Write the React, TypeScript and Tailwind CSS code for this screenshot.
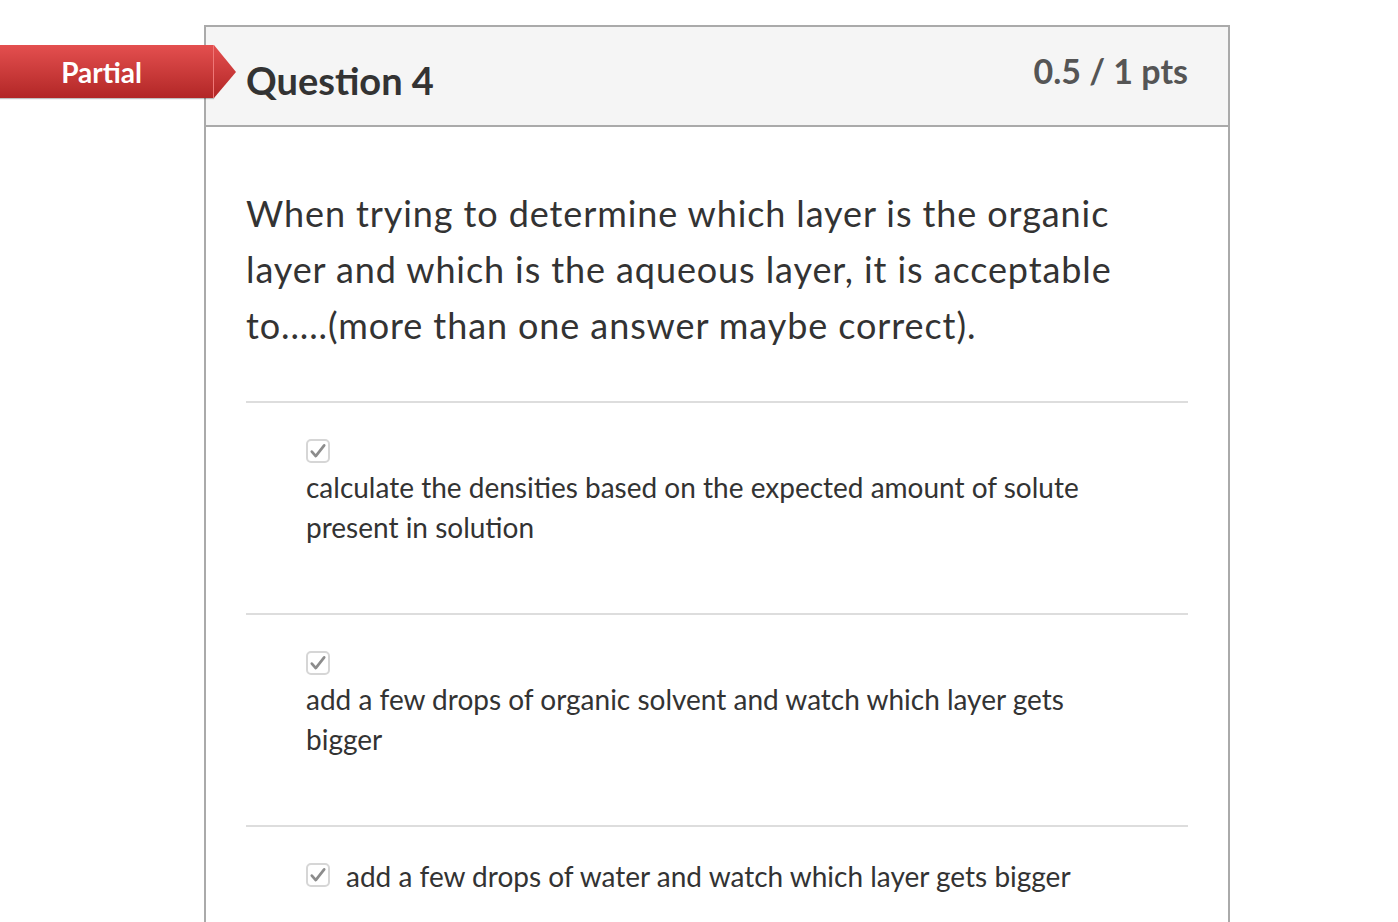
import React from "react"

const font = { fontFamily: "Lato, 'Open Sans', sans-serif" }

function Check() {
  return (
    <span className="inline-flex w-[24px] h-[24px] shrink-0 items-center justify-center rounded-[5px] border-2 border-[#d6d6d6] bg-white">
      <svg viewBox="0 0 16 16" className="w-[18px] h-[18px]" fill="none" stroke="#8c8c8c" strokeWidth={2.4} strokeLinecap="round" strokeLinejoin="round">
        <path d="M2.5 8.5l3.5 4L13.5 3" />
      </svg>
    </span>
  )
}

function PartialBadge() {
  return (
    <div className="absolute left-0 top-[45px] flex h-[53px] z-10">
      <div className="w-[214px] h-full bg-gradient-to-b from-[#e44f4f] to-[#b22626] flex items-center justify-center border-r border-[#e77] pr-[10px] shadow-[0_1px_1px_rgba(0,0,0,0.25)]">
        <span className="text-white font-bold text-[28px] leading-none">Partial</span>
      </div>
      <svg width="22" height="53" viewBox="0 0 22 53" className="block">
        <defs>
          <linearGradient id="bg" x1="0" y1="0" x2="0" y2="1">
            <stop offset="0" stopColor="#e44f4f" />
            <stop offset="1" stopColor="#b22626" />
          </linearGradient>
        </defs>
        <path d="M0 0 L22 27 L0 53 Z" fill="url(#bg)" />
      </svg>
    </div>
  )
}

const answers = [
  { text: "calculate the densities based on the expected amount of solute present in solution", inline: false },
  { text: "add a few drops of organic solvent and watch which layer gets bigger", inline: false },
  { text: "add a few drops of water and watch which layer gets bigger", inline: true },
]

export default function App() {
  return (
    <div className="relative min-h-screen bg-white pt-[25px]" style={font}>
      <PartialBadge />
      <div className="ml-[204px] w-[1026px] border-2 border-b-0 border-[#aaaaaa] min-h-[900px]">
        <div className="h-[100px] bg-[#f5f5f5] border-b-2 border-[#aaaaaa] flex justify-between px-[40px]">
          <h2 className="pt-[31px] text-[38px] font-bold leading-[1.2] text-[#333]">Question 4</h2>
          <div className="pt-[24px] text-[34px] font-bold leading-[1.2] text-[#555]">0.5 / 1 pts</div>
        </div>
        <div className="px-[40px] pt-[58px]">
          <p className="text-[36px] leading-[56px] tracking-[0.9px] text-[#333] pr-[40px]">
            When trying to determine which layer is the organic layer and which is the aqueous layer, it is acceptable to.....(more than one answer maybe correct).
          </p>
          <div className="mt-[48px]">
            {answers.map((a) => (
              <div key={a.text} className="border-t-2 border-[#dddddd] pl-[60px] pt-[36px] pb-[66px] pr-[80px]">
                {a.inline ? (
                  <div className="flex items-start gap-[16px]">
                    <Check />
                    <span className="text-[28px] leading-[26px] text-[#333]">{a.text}</span>
                  </div>
                ) : (
                  <>
                    <div className="h-[24px] flex"><Check /></div>
                    <div className="mt-[4px] text-[28px] leading-[40px] text-[#333]">{a.text}</div>
                  </>
                )}
              </div>
            ))}
          </div>
        </div>
      </div>
    </div>
  )
}
